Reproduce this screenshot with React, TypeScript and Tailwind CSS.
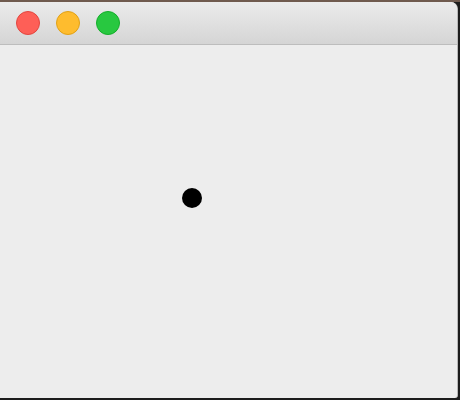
export default function App() {
  return (
    <div className="w-[460px] h-[400px] bg-[#1c1c1c] flex flex-col overflow-hidden">
      <div className="h-[2px] bg-[#6f5a4e] shrink-0" />
      <div className="w-[458px] h-[396px] flex flex-col bg-[#ededed] rounded-tr-[7px] rounded-br-[3px] overflow-hidden border-r border-[#b8b8b8]">
        {/* Title bar */}
        <div className="h-[43px] shrink-0 flex items-center gap-4 pl-4 bg-gradient-to-b from-[#ebebeb] to-[#d5d5d5] border-b border-[#bdbdbd]">
          <span className="w-6 h-6 rounded-full bg-[#fe5f57] border border-[#e2463f]" />
          <span className="w-6 h-6 rounded-full bg-[#febc2e] border border-[#e1a116]" />
          <span className="w-6 h-6 rounded-full bg-[#28c840] border border-[#14ae2a]" />
        </div>
        {/* Content */}
        <div className="flex-1 relative">
          <span className="absolute left-[182px] top-[143px] w-5 h-5 rounded-full bg-black" />
        </div>
      </div>
    </div>
  );
}
